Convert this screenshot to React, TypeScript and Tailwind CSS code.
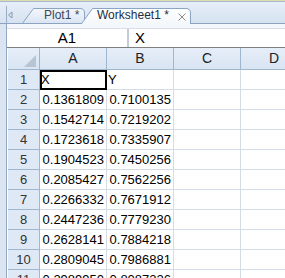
import React from "react";

const rows: [string, string][] = [
  ["0.1361809", "0.7100135"],
  ["0.1542714", "0.7219202"],
  ["0.1723618", "0.7335907"],
  ["0.1904523", "0.7450256"],
  ["0.2085427", "0.7562256"],
  ["0.2266332", "0.7671912"],
  ["0.2447236", "0.7779230"],
  ["0.2628141", "0.7884218"],
  ["0.2809045", "0.7986881"],
  ["0.2989950", "0.8087226"],
];

function TabStrip() {
  return (
    <div className="relative h-[22px] bg-gradient-to-b from-[#e6eef8] to-[#d6e2f1]">
      <svg className="absolute inset-0" width="285" height="22" viewBox="0 0 285 22">
        <defs>
          <linearGradient id="inactive" x1="0" y1="0" x2="0" y2="1">
            <stop offset="0" stopColor="#f3f7fc" />
            <stop offset="1" stopColor="#d9e4f2" />
          </linearGradient>
          <linearGradient id="active" x1="0" y1="0" x2="0" y2="1">
            <stop offset="0" stopColor="#ffffff" />
            <stop offset="1" stopColor="#f4f7fb" />
          </linearGradient>
        </defs>
        <line x1="6.5" y1="4" x2="6.5" y2="22" stroke="#9aaec8" />
        <polygon points="12,10 8.5,13 12,16" fill="none" stroke="#8797ad" />
        <path d="M22,22 L33.5,6.5 L80,6.5 Q84.5,6.5 84.5,11 L84.5,22" fill="url(#inactive)" stroke="#8ca3c2" />
        <line x1="0" y1="21.5" x2="83" y2="21.5" stroke="#8ca3c2" />
        <line x1="190" y1="21.5" x2="285" y2="21.5" stroke="#8ca3c2" />
        <path d="M81,22.5 L92.5,6.5 L186,6.5 Q190.5,6.5 190.5,11 L190.5,22.5" fill="url(#active)" stroke="#8ca3c2" />
        <path d="M178.5,11.5 L185.5,18.5 M185.5,11.5 L178.5,18.5" stroke="#8a8a8a" strokeWidth="1" />
      </svg>
      <span className="absolute left-[44px] top-[6px] text-[12px] leading-[14px] text-[#3b4658]">Plot1 *</span>
      <span className="absolute left-[97px] top-[6px] text-[12px] leading-[14px] text-[#1c2c44]">Worksheet1 *</span>
    </div>
  );
}

function HeaderCell({ label }: { label: string }) {
  return (
    <div className="w-[67px] shrink-0 h-[22px] border-r border-b border-[#9eb6ce] bg-gradient-to-b from-[#e6eef8] to-[#d9e5f3] flex items-center justify-center text-[14px] text-[#222]">
      {label}
    </div>
  );
}

export default function App() {
  return (
    <div className="w-[285px] h-[278px] overflow-hidden bg-[#dbe5f2] font-['Liberation_Sans',Arial,sans-serif]">
      <div className="h-px bg-[#dcdcae]" />
      <div className="h-px bg-[#a9b8cc]" />
      <TabStrip />
      <div className="flex">
        <div className="w-[6px] shrink-0" />
        <div className="flex-1 min-w-0 border-l border-[#8fa6c3] bg-white overflow-hidden">
          <div className="h-[4px] bg-[#f4f7fb]" />
          <div className="flex h-[19px] items-center border-t border-[#d8dde6] bg-white">
            <div className="w-[120px] shrink-0 text-center text-[15px] leading-[18px] text-black">A1</div>
            <div className="w-[2px] h-full bg-[#c4ccd8]" />
            <div className="pl-[6px] text-[15px] leading-[18px] text-black">X</div>
          </div>
          <div className="h-px bg-[#7f7f7f]" />
          <div className="pl-px">
            <div className="flex">
              <div className="w-[32px] shrink-0 h-[22px] border-r border-b border-[#9eb6ce] bg-gradient-to-b from-[#e6eef8] to-[#d9e5f3] relative">
                <svg className="absolute right-[3px] bottom-[2px]" width="12" height="12" viewBox="0 0 12 12">
                  <polygon points="12,0 12,12 0,12" fill="#b7c4d6" />
                </svg>
              </div>
              <HeaderCell label="A" />
              <HeaderCell label="B" />
              <HeaderCell label="C" />
              <HeaderCell label="D" />
            </div>
            <div className="flex">
              <div className="w-[32px] shrink-0 h-[20px] border-r border-b border-[#9eb6ce] bg-[#dfe9f5] flex items-center justify-center text-[13px] text-[#333]">
                1
              </div>
              <div className="relative w-[67px] shrink-0 h-[20px] border-r border-b border-[#d4dce8] text-[13px] leading-[19px] pl-px text-black">
                X
                <div className="absolute left-0 top-0 w-[67px] h-[20px] border-2 border-black" />
              </div>
              <div className="w-[67px] shrink-0 h-[20px] border-r border-b border-[#d4dce8] text-[13px] leading-[19px] pl-px text-black">
                Y
              </div>
              <div className="w-[67px] shrink-0 h-[20px] border-r border-b border-[#d4dce8]" />
              <div className="w-[67px] shrink-0 h-[20px] border-r border-b border-[#d4dce8]" />
            </div>
            {rows.map(([a, b], i) => (
              <div key={i} className="flex">
                <div className="w-[32px] shrink-0 h-[20px] border-r border-b border-[#9eb6ce] bg-[#dfe9f5] flex items-center justify-center text-[13px] text-[#333]">
                  {i + 2}
                </div>
                <div className="w-[67px] shrink-0 h-[20px] border-r border-b border-[#d4dce8] text-right pr-[2px] text-[13px] leading-[19px] text-black">
                  {a}
                </div>
                <div className="w-[67px] shrink-0 h-[20px] border-r border-b border-[#d4dce8] text-right pr-[2px] text-[13px] leading-[19px] text-black">
                  {b}
                </div>
                <div className="w-[67px] shrink-0 h-[20px] border-r border-b border-[#d4dce8]" />
                <div className="w-[67px] shrink-0 h-[20px] border-r border-b border-[#d4dce8]" />
              </div>
            ))}
          </div>
        </div>
      </div>
    </div>
  );
}
